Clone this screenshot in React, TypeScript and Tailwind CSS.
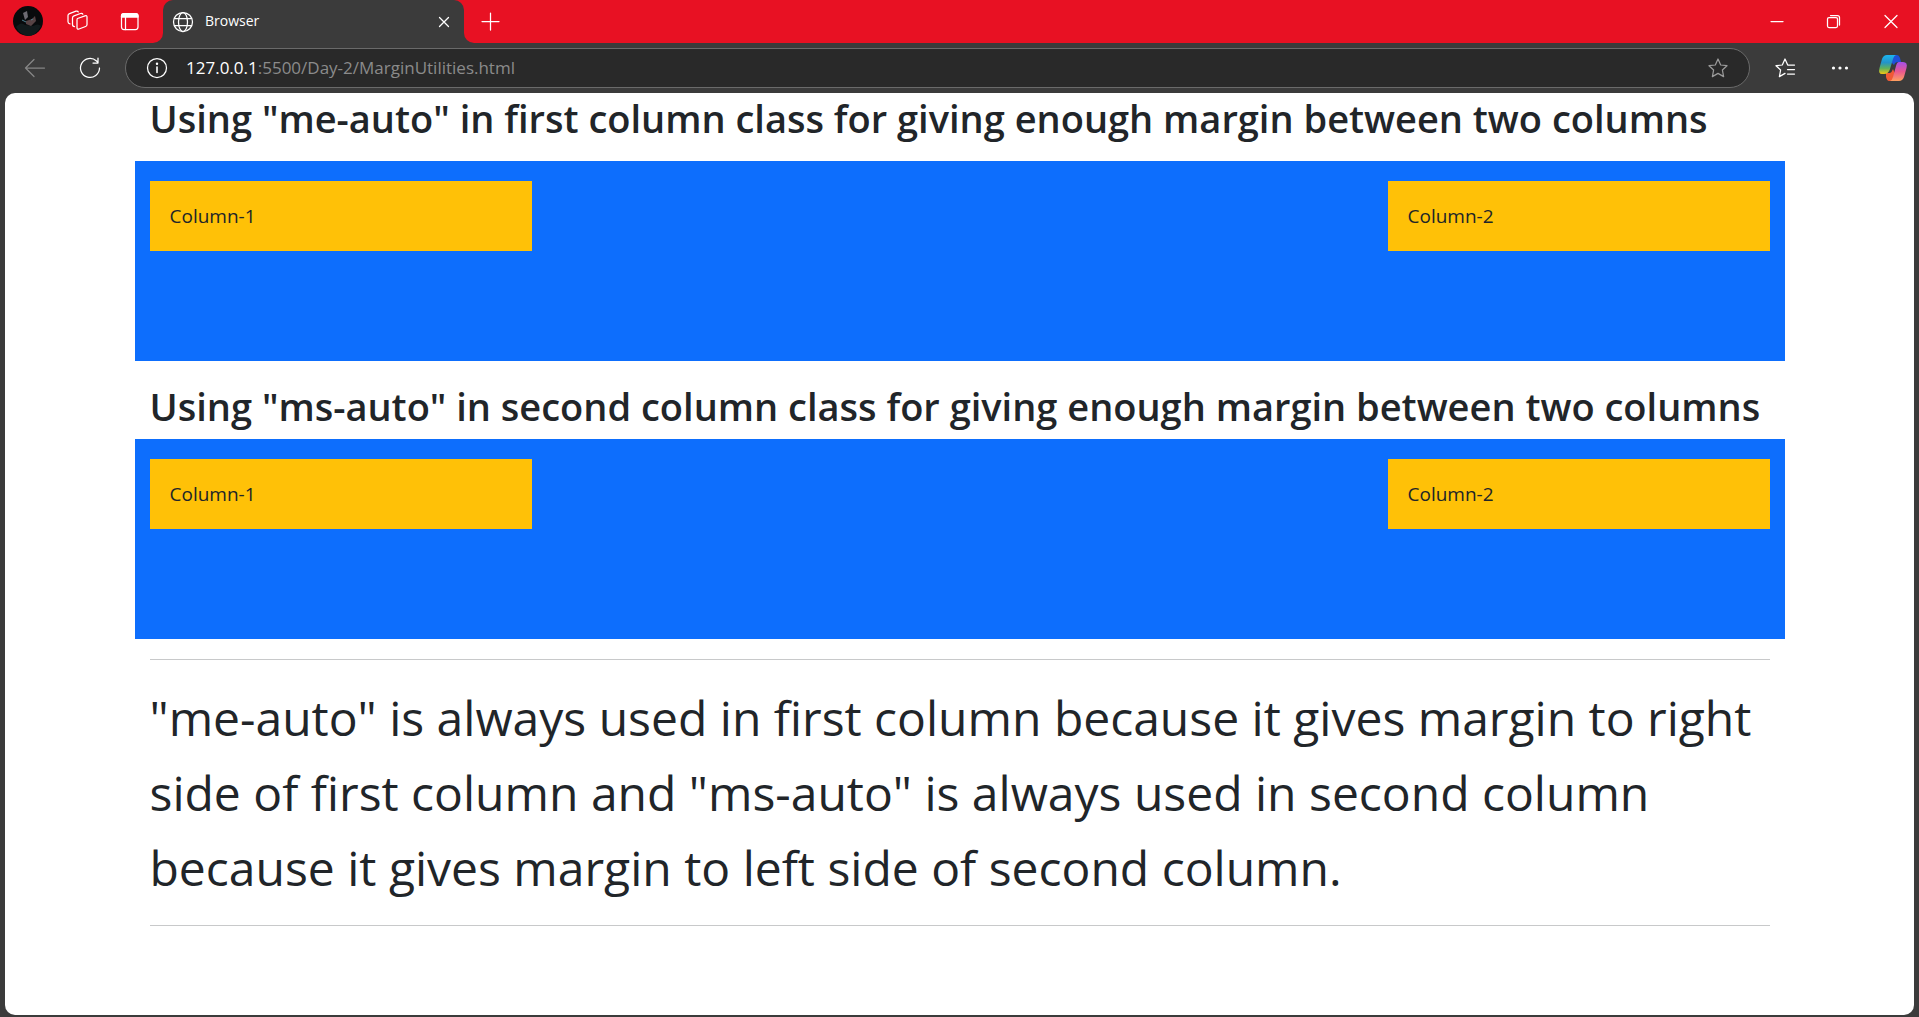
import type { ReactNode } from 'react';

function Icon({ size = 20, children }: { size?: number; children: ReactNode }) {
  return (
    <svg width={size} height={size} viewBox={`0 0 ${size} ${size}`} fill="none" stroke="currentColor" strokeWidth="1.25" strokeLinecap="round" strokeLinejoin="round" aria-hidden="true" className="block shrink-0">
      {children}
    </svg>
  );
}

function Avatar() {
  return (
    <svg width="30" height="30" viewBox="0 0 30 30" aria-hidden="true" className="block">
      <circle cx="15" cy="15" r="15" fill="#080a0c" />
      <path d="M3 21 Q8 15 12 19 L20 20 Q25 17 28 20 Q23 30 15 30 Q7 29 3 21Z" fill="#111a1c" />
      <path d="M10 7 L14 5 L15 11 L12 14Z" fill="#6d6a72" />
      <path d="M13 15 L19 13 L22 10 L23 15 L18 20 L13 18Z" fill="#574345" />
      <path d="M9 14 L13 16 M18 14 L20 13" stroke="#4d8190" strokeWidth="1" />
    </svg>
  );
}

function TabBar() {
  return (
    <header className="flex h-[43px] items-stretch bg-[#e81123] text-white">
      <div className="flex w-[163px] shrink-0 items-center bg-[#3b3b3b]">
        <div className="flex h-full grow items-center rounded-br-[10px] bg-[#e81123] pb-0.5 pl-[13px]">
          <button aria-label="Profile" className="w-[52px]"><Avatar /></button>
          <button aria-label="Workspaces" className="w-[53px]">
            <Icon size={24}>
              <path d="M12.5 9.5 L20 6.8 Q22 6.200 22 8 V15.500 Q22 17 20.600 17.500 L14 20 Q12 20.600 12 18.800 V11 Q12 9.800 12.500 9.500Z" />
              <path d="M9.500 17.500 Q7.500 17.500 7.500 15.500 V9 Q7.500 7.500 9 6.900 L15.500 4.500 Q17.300 4 17.800 5.200" />
              <path d="M5 14.800 Q3 14.500 3 12.800 V6.500 Q3 5.200 4.500 4.600 L11 2.200 Q12.800 1.700 13.300 2.900" />
            </Icon>
          </button>
          <button aria-label="Tab actions">
            <Icon size={22}>
              <rect x="3.500" y="3.500" width="16.500" height="16" rx="2.500" />
              <path d="M3.500 6 Q3.500 3.500 6 3.500 H17.500 Q20 3.500 20 6 V7 H3.500Z" fill="currentColor" />
              <path d="M7.500 7 V19.500" />
            </Icon>
          </button>
        </div>
      </div>
      <div className="flex grow bg-[#3b3b3b]">
        <div className="flex w-[301px] shrink-0 bg-[#e81123]">
          <div className="flex grow items-center rounded-t-[10px] bg-[#3b3b3b] pr-3 pl-[9px]">
            <Icon size={22}>
              <circle cx="11" cy="11" r="9.500" />
              <ellipse cx="11" cy="11" rx="4.500" ry="9.500" />
              <path d="M2.500 7.500 H19.500 M2.500 14.500 H19.500" />
            </Icon>
            <span className="ml-[11px] grow pb-0.5 text-[14px] leading-5">Browser</span>
            <button aria-label="Close tab"><Icon size={16}><path d="M3.500 3.500 L12.500 12.500 M12.500 3.500 L3.500 12.500" /></Icon></button>
          </div>
        </div>
        <div className="flex grow items-center rounded-bl-[10px] bg-[#e81123] pb-0.5 pl-4">
          <button aria-label="New tab"><Icon size={20}><path d="M10.500 2 V19 M2 10.500 H19" /></Icon></button>
          <div className="ml-auto flex">
            <button aria-label="Minimize" className="flex w-[57px] justify-center"><Icon size={16}><path d="M2 8.500 H14" /></Icon></button>
            <button aria-label="Restore" className="flex w-[57px] justify-center">
              <Icon size={16}><rect x="1.500" y="4.500" width="10" height="10" rx="1.500" /><path d="M4.500 2.500 H11.500 Q13.500 2.500 13.500 4.500 V12" /></Icon>
            </button>
            <button aria-label="Close" className="flex w-[57px] justify-center"><Icon size={16}><path d="M2 2.500 L14 14.500 M14 2.500 L2 14.500" /></Icon></button>
          </div>
        </div>
      </div>
    </header>
  );
}

const STAR = 'M11 2 L13.700 8 L20 8.700 L15.400 13 L16.600 19.600 L11 16.400 L5.400 19.600 L6.600 13 L2 8.700 L8.300 8Z';

function Copilot() {
  return (
    <svg width="30" height="28" viewBox="0 0 30 28" aria-hidden="true" className="block">
      <defs>
        <linearGradient id="cpBlue" x1="0" y1="0" x2="0" y2="1"><stop offset="0" stopColor="#1bb5f0" /><stop offset=".4" stopColor="#2493c8" /><stop offset=".7" stopColor="#5fb15b" /><stop offset="1" stopColor="#f2c714" /></linearGradient>
        <linearGradient id="cpPink" x1="0" y1="0" x2="0" y2="1"><stop offset="0" stopColor="#a450ea" /><stop offset=".5" stopColor="#e95790" /><stop offset="1" stopColor="#ffa05f" /></linearGradient>
      </defs>
      <path d="M15 1 H19 Q21 1 22 4 L23 8 H20 Q17 8 16 11 L13 8Z" fill="#1f50d8" />
      <path d="M8 19 H12 Q14 18 15 15 L17 20 L14 27 H11 Q9 27 8 23Z" fill="#f05a35" />
      <path d="M9 1 H18 Q16 1.500 15 5 L12 15 Q10.500 20 6 20 H4 Q0 20 1.500 14 L4 5 Q5.500 1 9 1Z" fill="url(#cpBlue)" />
      <path d="M21 8 H25 Q30 8 28.500 14 L26 23 Q24.500 27 21 27 H12 Q14 26.500 15 23 L18 12 Q19 8 21 8Z" fill="url(#cpPink)" />
    </svg>
  );
}

function Toolbar() {
  return (
    <div className="flex h-[50px] items-center bg-[#3b3b3b] text-white">
      <div className="flex w-[125px] shrink-0 items-center pl-6">
        <button aria-label="Back" className="w-[55px] text-[#858585]"><Icon size={22}><path d="M20.500 11 H1.500 M10 2.500 L1.500 11 L10 19.500" /></Icon></button>
        <button aria-label="Refresh">
          <Icon size={22}><path d="M20.500 11 A9.500 9.500 0 1 1 17.500 4 L19 5.500 M19 1 V6 H14" /></Icon>
        </button>
      </div>
      <div className="flex h-10 grow items-center rounded-full border border-[#6a6a6a] bg-[#292929] pr-5 pl-5">
        <button aria-label="Site information">
          <Icon size={22}><circle cx="11" cy="11" r="9.500" /><path d="M11 10 V15.500" strokeWidth="1.600" /><circle cx="11" cy="6.800" r=".6" fill="currentColor" /></Icon>
        </button>
        <a href="http://127.0.0.1:5500/Day-2/MarginUtilities.html" className="ml-[18px] grow text-[17px] leading-6 text-[#8b8b8b]">
          <span className="text-white">127.0.0.1</span>:5500/Day-2/MarginUtilities.html
        </a>
        <button aria-label="Add to favorites" className="text-[#9a9a9a]"><Icon size={22}><path d={STAR} /></Icon></button>
      </div>
      <div className="flex w-[169px] shrink-0 items-center pl-6">
        <button aria-label="Favorites" className="w-[57px]">
          <Icon size={22}><path d="M11 16.400 L5.400 19.600 L6.600 13 L2 8.700 L8.300 8 L11 2 L13.700 8 H20.500 M13.500 12.500 H20.500 M13.500 17 H20.500" /></Icon>
        </button>
        <button aria-label="Settings and more" className="w-[47px]">
          <Icon size={18}><g fill="currentColor" stroke="none"><circle cx="2.500" cy="9" r="1.600" /><circle cx="9" cy="9" r="1.600" /><circle cx="15.500" cy="9" r="1.600" /></g></Icon>
        </button>
        <button aria-label="Copilot"><Copilot /></button>
      </div>
    </div>
  );
}

function Row() {
  return (
    <div className="flex h-[200px] items-start justify-between bg-[#0d6efd] px-[15px] pt-5">
      {['Column-1', 'Column-2'].map((label) => (
        <div key={label} className="w-[382px] bg-[#ffc107] p-5 text-[19px] leading-[30px]">{label}</div>
      ))}
    </div>
  );
}

export default function App() {
  return (
    <div className="flex min-h-screen flex-col bg-[#3b3b3b] font-['Open_Sans','Noto_Sans',sans-serif]">
      <TabBar />
      <Toolbar />
      <main className="mx-[5px] mb-0.5 grow rounded-[10px] bg-white text-[#212529]">
        <div className="mx-auto max-w-[1650px]">
          <h1 className="h-[68px] px-[15px] text-[38px] leading-[50px] font-semibold whitespace-nowrap">Using "me-auto" in first column class for giving enough margin between two columns</h1>
          <Row />
          <h1 className="mt-5 h-[58px] px-[15px] text-[38px] leading-[50px] font-semibold whitespace-nowrap">Using "ms-auto" in second column class for giving enough margin between two columns</h1>
          <Row />
          <div className="px-[15px]">
            <hr className="my-5 h-px border-0 bg-[#c8c9ca]" />
            <p className="text-[48px] leading-[75px]">"me-auto" is always used in first column because it gives margin to right side of first column and "ms-auto" is always used in second column because it gives margin to left side of second column.</p>
            <hr className="my-5 h-px border-0 bg-[#c8c9ca]" />
          </div>
        </div>
      </main>
    </div>
  );
}
